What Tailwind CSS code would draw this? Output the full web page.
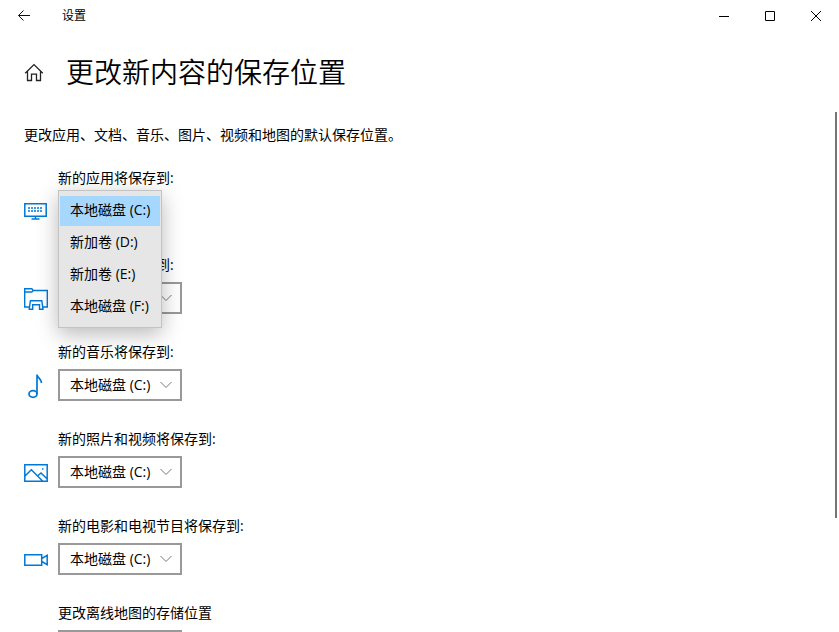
<!DOCTYPE html>
<html lang="zh-CN">
<head>
<meta charset="utf-8">
<title>设置</title>
<script src="https://cdn.jsdelivr.net/npm/@tailwindcss/browser@4"></script>
</head>
<body class="flex h-screen flex-col overflow-hidden bg-white font-['Open_Sans','Noto_Sans_CJK_SC',sans-serif] text-sm leading-5 text-black">
  <header class="flex h-8 shrink-0 items-center">
    <button aria-label="返回" class="flex h-8 w-12 items-center justify-center">
      <svg class="size-4" viewBox="0 0 16 16" fill="none" stroke="#111"><path d="M14 7.5H2.5M7.5 2.5l-5 5 5 5"/></svg>
    </button>
    <span class="ml-3.5 text-xs leading-5">设置</span>
    <div class="ml-auto flex">
      <button aria-label="最小化" class="flex h-8 w-[46px] items-center justify-center"><svg class="size-2.5" viewBox="0 0 10 10" stroke="#000" shape-rendering="crispEdges"><path d="M0 5.5h10"/></svg></button>
      <button aria-label="最大化" class="flex h-8 w-[46px] items-center justify-center"><svg class="size-2.5" viewBox="0 0 10 10" fill="none" stroke="#000"><path d="M.5.5h9v9h-9z"/></svg></button>
      <button aria-label="关闭" class="flex h-8 w-[46px] items-center justify-center"><svg class="size-2.5" viewBox="0 0 10 10" stroke="#000"><path d="M0 0l10 10M10 0L0 10"/></svg></button>
    </div>
  </header>

  <div class="flex h-20 shrink-0 items-center gap-[22px] px-6">
    <a href="#" aria-label="主页"><svg class="size-5" viewBox="0 0 20 20" fill="none" stroke="#222" stroke-width="1.3"><path d="M1.2 11.2 10 2.6l8.8 8.6M3.5 9.3v9.2h4v-6.4h5v6.4h4V9.3"/></svg></a>
    <h1 class="text-[28px] leading-9 font-[350]">更改新内容的保存位置</h1>
  </div>

  <div class="flex min-h-0 flex-1">
    <main class="flex min-w-0 flex-1 flex-col overflow-hidden pt-[13px] pl-6">
      <p>更改应用、文档、音乐、图片、视频和地图的默认保存位置。</p>

      <form class="mt-[23px] flex flex-col gap-7">
        <div class="grid grid-cols-[24px_auto] justify-start gap-x-2.5 gap-y-[7px]">
          <label for="apps" class="col-start-2">新的应用将保存到:</label>
          <svg class="col-start-1 size-6 self-center" viewBox="0 0 24 24" fill="none" stroke="#0078d7" stroke-width="1.5" aria-hidden="true"><path d="M.8 4.8h21.4v12.4H.8zM11.5 17v3M7.5 20h8"/><path d="M4 9h14M4 12h14" stroke-dasharray="2 1"/></svg>
          <div class="relative h-8 w-31">
            <button id="apps" type="button" aria-haspopup="listbox" aria-expanded="true" aria-controls="drives" aria-label="新的应用将保存到" class="h-8 w-26"></button>
            <ul id="drives" role="listbox" class="absolute -top-[5px] left-0 z-10 flex w-26 flex-col gap-0.5 border border-[#c3c3c3] bg-[#e6e6e6] px-px py-[5px] whitespace-nowrap shadow-[0_6px_20px_rgba(0,0,0,0.28)]">
              <li role="option" aria-selected="true" class="h-[30px] bg-[#a6d8ff] px-2.5 leading-7">本地磁盘 (C:)</li>
              <li role="option" aria-selected="false" class="h-[30px] px-2.5 leading-7">新加卷 (D:)</li>
              <li role="option" aria-selected="false" class="h-[30px] px-2.5 leading-7">新加卷 (E:)</li>
              <li role="option" aria-selected="false" class="h-[30px] px-2.5 leading-7">本地磁盘 (F:)</li>
            </ul>
          </div>
        </div>

        <div class="grid grid-cols-[24px_auto] justify-start gap-x-2.5 gap-y-[7px]">
          <label for="docs" class="col-start-2">新的文档将保存到:</label>
          <svg class="col-start-1 size-6 self-center overflow-visible" viewBox="0 0 24 24" fill="none" stroke="#0078d7" stroke-width="1.4" aria-hidden="true"><path d="M5 21H.7V2.7h7.1l1.5 1.8h14V21H19M.7 6h7.1l1.5-1.5"/><path d="M5.2 23.3 6.4 14.7h11.4L19 23.3h-3.5v-4.6H8.7v4.6z"/></svg>
          <div class="grid h-8 w-31 items-center">
            <select id="docs" class="col-start-1 row-start-1 h-8 w-full appearance-none border-2 border-[#999] bg-white px-2.5"><option>本地磁盘 (C:)</option></select>
            <svg class="pointer-events-none col-start-1 row-start-1 mr-2 size-4 justify-self-end" viewBox="0 0 16 16" fill="none" stroke="#777" aria-hidden="true"><path d="m2.5 5 5.5 5.5L13.500 5"/></svg>
          </div>
        </div>

        <div class="grid grid-cols-[24px_auto] justify-start gap-x-2.5 gap-y-[7px]">
          <label for="music" class="col-start-2">新的音乐将保存到:</label>
          <svg class="col-start-1 size-6 self-center overflow-visible" viewBox="0 0 24 24" fill="none" stroke="#0078d7" stroke-width="1.7" aria-hidden="true"><ellipse cx="9" cy="21" rx="4" ry="3.3"/><path d="M13 21V1.500c.4 3.600 4.400 3.900 4.500 8.500"/></svg>
          <div class="grid h-8 w-31 items-center">
            <select id="music" class="col-start-1 row-start-1 h-8 w-full appearance-none border-2 border-[#999] bg-white px-2.5"><option>本地磁盘 (C:)</option></select>
            <svg class="pointer-events-none col-start-1 row-start-1 mr-2 size-4 justify-self-end" viewBox="0 0 16 16" fill="none" stroke="#777" aria-hidden="true"><path d="m2.5 5 5.5 5.5L13.500 5"/></svg>
          </div>
        </div>

        <div class="grid grid-cols-[24px_auto] justify-start gap-x-2.5 gap-y-[7px]">
          <label for="photos" class="col-start-2">新的照片和视频将保存到:</label>
          <svg class="col-start-1 size-6 self-center" viewBox="0 0 24 24" fill="none" stroke="#0078d7" stroke-width="1.5" aria-hidden="true"><path d="M.8 4.8h22.4v16.4H.8zM1 16l6.300-6.300 11.500 11.500M13.500 16l3.500-3 6 5.800"/><path d="M18 9h1.500" stroke-width="1.500"/></svg>
          <div class="grid h-8 w-31 items-center">
            <select id="photos" class="col-start-1 row-start-1 h-8 w-full appearance-none border-2 border-[#999] bg-white px-2.5"><option>本地磁盘 (C:)</option></select>
            <svg class="pointer-events-none col-start-1 row-start-1 mr-2 size-4 justify-self-end" viewBox="0 0 16 16" fill="none" stroke="#777" aria-hidden="true"><path d="m2.5 5 5.5 5.5L13.500 5"/></svg>
          </div>
        </div>

        <div class="grid grid-cols-[24px_auto] justify-start gap-x-2.5 gap-y-[7px]">
          <label for="movies" class="col-start-2">新的电影和电视节目将保存到:</label>
          <svg class="col-start-1 size-6 self-center" viewBox="0 0 24 24" fill="none" stroke="#0078d7" stroke-width="1.5" aria-hidden="true"><path d="M.8 7.8h16.900v10.400H.8zM17.800 11.500l5.400-3.200v9.400l-5.400-3.200"/></svg>
          <div class="grid h-8 w-31 items-center">
            <select id="movies" class="col-start-1 row-start-1 h-8 w-full appearance-none border-2 border-[#999] bg-white px-2.5"><option>本地磁盘 (C:)</option></select>
            <svg class="pointer-events-none col-start-1 row-start-1 mr-2 size-4 justify-self-end" viewBox="0 0 16 16" fill="none" stroke="#777" aria-hidden="true"><path d="m2.5 5 5.5 5.5L13.500 5"/></svg>
          </div>
        </div>

        <div class="grid grid-cols-[24px_auto] justify-start gap-x-2.5 gap-y-[7px]">
          <label for="maps" class="col-start-2">更改离线地图的存储位置</label>
          <select id="maps" class="col-start-2 h-8 w-31 appearance-none border-2 border-[#999] bg-white px-2.5"><option>本地磁盘 (C:)</option></select>
        </div>
      </form>
    </main>
    <div class="mr-0.5 w-0.5" aria-hidden="true"><div class="h-[78%] bg-[#767676]"></div></div>
  </div>
</body>
</html>
